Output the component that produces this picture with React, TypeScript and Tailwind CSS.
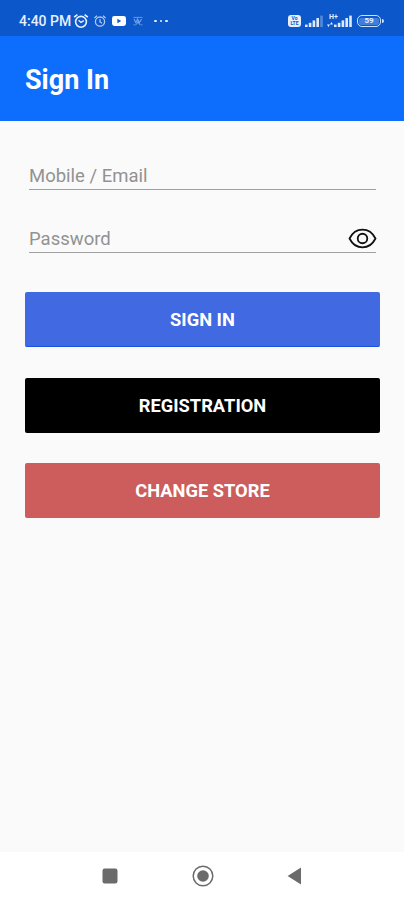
import clsx from "clsx";

const AlarmIcon = ({ className }: { className?: string }) => (
  <svg viewBox="0 0 16 16" fill="none" stroke="currentColor" strokeWidth="1.6" className={className}>
    <circle cx="8" cy="8.8" r="5.4" />
    <path d="M1.2 4.2 4.4 1.6M14.8 4.2 11.6 1.6" strokeWidth="1.7" />
    <path d="M5.6 7.2 8 9.4 10.8 7.6" strokeWidth="1.4" />
  </svg>
);

const DimAlarmIcon = ({ className }: { className?: string }) => (
  <svg viewBox="0 0 12 12" fill="none" stroke="currentColor" strokeWidth="1.3" className={className}>
    <circle cx="6" cy="6.6" r="4.6" />
    <path d="M.4 3 3 .8M11.6 3 9 .8" />
    <path d="M6 4.2V7l2 1.2" />
  </svg>
);

const VideoIcon = () => (
  <svg viewBox="0 0 14 10" className="ml-[6px] h-2.5 w-3.5">
    <rect width="14" height="10" rx="2.4" fill="#fff" />
    <path d="M5.4 2.8v4.4L9.2 5z" fill="#0d57c8" />
  </svg>
);

const AppIcon = () => (
  <svg viewBox="0 0 10 10" fill="none" stroke="#8ab4ef" className="ml-[7px] size-2.5 opacity-80">
    <path d="M.5 1.4h9M.5 8.8h2.3M7.4 8.8h2.1" strokeWidth=".9" />
    <path d="M1 3l1.8 3.6L4.6 3l1.8 3.6L8.6 3M3.4 8.6 5 5.6l1.8 3" strokeWidth="1.1" />
  </svg>
);

const SignalBars = ({ dimLast }: { dimLast?: boolean }) => (
  <svg viewBox="0 0 18 12" fill="#dce9ff" className="h-3 w-[18px]">
    <rect x="0" y="9.6" width="2.6" height="2.4" />
    <rect x="3.8" y="7.8" width="2.6" height="4.2" />
    <rect x="7.6" y="5.4" width="2.6" height="6.6" />
    <rect x="11.4" y="3" width="2.6" height="9" />
    <rect x="15.2" y=".6" width="2.6" height="11.4" opacity={dimLast ? 0.35 : 1} />
  </svg>
);

const StatusBar = () => (
  <div className="flex h-9 items-center bg-[#0c57c9] pt-[6px] pr-5 pl-[19px] text-[#e6f0ff]">
    <span className="w-[52px] text-[14px] leading-4 font-medium whitespace-nowrap">4:40 PM</span>
    <AlarmIcon className="ml-[2px] size-4" />
    <DimAlarmIcon className="ml-[5px] size-3 opacity-75" />
    <VideoIcon />
    <AppIcon />
    <div className="ml-[11px] flex gap-[3px]">
      <i className="size-[2.5px] rounded-full bg-current" />
      <i className="size-[2.5px] rounded-full bg-current" />
      <i className="size-[2.5px] rounded-full bg-current" />
    </div>
    <div className="ml-auto flex items-center">
      <div className="flex h-3 w-[13px] flex-col items-center justify-center rounded-[3px] bg-[#e6f0ff] text-[5px] leading-[5px] font-bold text-[#0c57c9]">
        <span>Vo</span>
        <span>LTE</span>
      </div>
      <div className="ml-[4px]">
        <SignalBars dimLast />
      </div>
      <div className="relative ml-[4px] flex h-3 w-[25px] justify-end">
        <span className="absolute -top-px left-0.5 text-[7px] leading-[6px] font-bold">H+</span>
        <svg viewBox="0 0 6 5" fill="currentColor" className="absolute bottom-0 left-0 h-[5px] w-1.5">
          <path d="M0 2.6h3L1.5 5zM3 2.4h3L4.5 0z" />
        </svg>
        <SignalBars />
      </div>
      <div className="ml-[5px] flex h-3 w-6 items-center justify-center rounded-[5px] border-[1.5px] border-[#cfe0ff] p-px">
        <span className="flex h-[7px] w-full items-center justify-center rounded-[2px] bg-[#3f7fdc] text-[8px] leading-none font-bold">
          59
        </span>
      </div>
      <i className="ml-px h-1 w-[2px] rounded-r-full bg-[#cfe0ff]" />
    </div>
  </div>
);

const EyeIcon = () => (
  <svg viewBox="0 0 30 22" fill="none" stroke="#111" strokeWidth="1.9" strokeLinejoin="round" className="-mr-px mb-[3px] h-[21px] w-[29px]">
    <path d="M1.4 11C4.4 5 9.2 1.7 15 1.7S25.6 5 28.6 11C25.6 17 20.8 20.3 15 20.3S4.4 17 1.4 11Z" />
    <circle cx="15" cy="11" r="5" />
  </svg>
);

interface FieldProps {
  label: string;
  type: string;
  children?: React.ReactNode;
}

const Field = ({ label, type, children }: FieldProps) => (
  <div className="flex h-[31px] items-end border-b border-[#a0a0a0]">
    <input
      type={type}
      placeholder={label}
      className="h-6 min-w-0 flex-1 bg-transparent text-[18.5px] text-[#333] outline-none placeholder:text-[#929292]"
    />
    {children}
  </div>
);

const ActionButton = ({ label, className }: { label: string; className: string }) => (
  <button
    className={clsx(
      "flex h-[55px] w-full items-center justify-center rounded-[2px] pt-px text-[18.3px] font-bold text-white",
      className
    )}
  >
    {label}
  </button>
);

const NavBar = () => (
  <nav className="flex h-12 items-center justify-between bg-white pr-[102px] pl-[102px] text-[#6b6b6b]">
    <svg viewBox="0 0 16 16" className="size-4">
      <rect x=".5" y=".5" width="15" height="15" rx="2.2" fill="currentColor" />
    </svg>
    <svg viewBox="0 0 22 22" className="size-[22px]">
      <circle cx="11" cy="11" r="9.8" fill="none" stroke="currentColor" strokeWidth="1.5" />
      <circle cx="11" cy="11" r="5.8" fill="currentColor" />
    </svg>
    <svg viewBox="0 0 15 18" className="h-[18px] w-[15px]">
      <path d="M.6 9 14 .6v16.8z" fill="currentColor" />
    </svg>
  </nav>
);

export default function App() {
  return (
    <div className="flex h-[900px] w-[404px] flex-col overflow-hidden bg-[#fafafa] font-['Roboto',sans-serif]">
      <StatusBar />
      <header className="flex h-[85px] items-center bg-[#0d6efd] pt-[3px] pl-[25px]">
        <h1 className="text-[27px] leading-8 font-bold text-white">Sign In</h1>
      </header>
      <main className="flex-1 px-[25px] pt-[38px]">
        <form className="flex flex-col gap-8 pr-[3px] pl-1">
          <Field label="Mobile / Email" type="text" />
          <Field label="Password" type="password">
            <EyeIcon />
          </Field>
        </form>
        <div className="-mr-px mt-[39px] flex flex-col gap-[30.5px]">
          <ActionButton label="SIGN IN" className="border-b border-[#1c50e0] bg-[#4169e1]" />
          <ActionButton label="REGISTRATION" className="bg-black" />
          <ActionButton label="CHANGE STORE" className="bg-[#cd5c5c]" />
        </div>
      </main>
      <NavBar />
    </div>
  );
}
